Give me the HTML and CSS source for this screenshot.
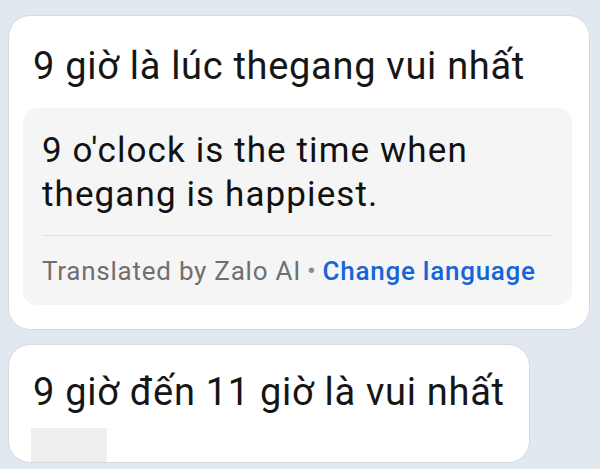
FILE: index.html
```html
<!DOCTYPE html>
<html lang="vi">
<head>
<meta charset="utf-8">
<title>Zalo translation</title>
<link rel="stylesheet" href="styles.css">
</head>
<body>
<div class="chat">
  <div class="bubble bubble-main">
    <div class="msg">9 giờ là lúc thegang vui nhất</div>
    <div class="translation">
      <div class="trans-text">9 o'clock is the time when<br>thegang is happiest.</div>
      <div class="divider"></div>
      <div class="footer"><span class="by">Translated by Zalo AI</span><span class="dot">•</span><span class="change">Change language</span></div>
    </div>
  </div>
  <div class="bubble bubble-second">
    <div class="msg msg-second">9 giờ đến 11 giờ là vui nhất</div>
    <div class="blur"></div>
  </div>
</div>
</body>
</html>
```
FILE: styles.css
```css
html, body {
  margin: 0;
  padding: 0;
}
body {
  background: #e2e8ef;
  font-family: Roboto, "Noto Sans", sans-serif;
  width: 600px;
  height: 469px;
  overflow: hidden;
}
.chat {
  display: flex;
  flex-direction: column;
  align-items: flex-start;
  gap: 14px;
  padding: 15px 0 0 8px;
}
.bubble {
  background: #ffffff;
  border: 1px solid #d3dae3;
  border-radius: 22px;
  box-sizing: border-box;
}
.bubble-main {
  width: 582px;
  height: 315px;
  padding: 28px 17px 0 14px;
}
.msg {
  font-size: 38px;
  letter-spacing: 0.7px;
  line-height: 44px;
  color: #161616;
  padding-left: 10px;
  white-space: nowrap;
}
.translation {
  margin-top: 20px;
  background: #f5f5f5;
  border-radius: 14px;
  padding: 21px 19px 18px 19px;
  height: 197px;
  box-sizing: border-box;
}
.trans-text {
  font-size: 35px;
  letter-spacing: 1.1px;
  line-height: 44px;
  color: #111111;
}
.divider {
  height: 1px;
  background: #e2e2e2;
  margin: 18px 0 20px 0;
}
.footer {
  font-size: 26px;
  letter-spacing: 0.75px;
  line-height: 30px;
  white-space: nowrap;
}
.by {
  color: #6f6f6f;
}
.dot {
  color: #8a8a8a;
  margin: 0 6px;
}
.change {
  color: #1565d8;
  font-weight: 500;
}
.bubble-second {
  padding: 25px 24px 0 14px;
  height: 119px;
}
.msg-second {
  padding-left: 10px;
}
.blur {
  margin: 14px 0 0 8px;
  width: 76px;
  height: 34px;
  background: #efefef;
}
```
